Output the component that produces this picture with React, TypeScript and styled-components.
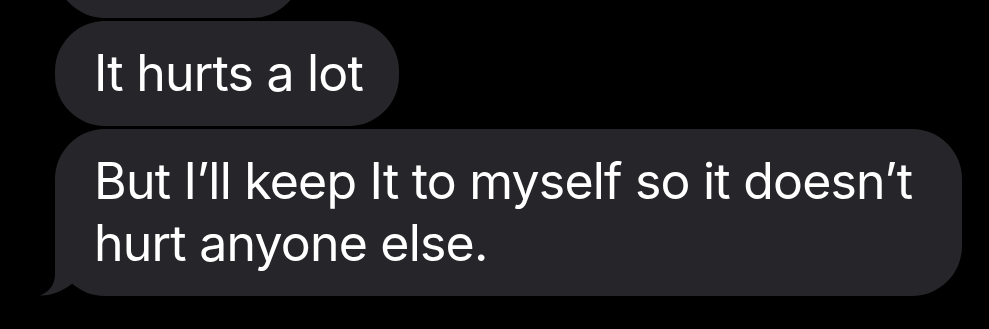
import React from "react";
import styled, { createGlobalStyle } from "styled-components";

const GlobalStyle = createGlobalStyle`
  html, body {
    margin: 0;
    padding: 0;
    background: #000;
    overflow: hidden;
  }
  body {
    font-family: Inter, "Noto Sans", "Liberation Sans", sans-serif;
    -webkit-font-smoothing: antialiased;
  }
`;

const Thread = styled.div`
  display: flex;
  flex-direction: column;
  align-items: flex-start;
  gap: 3px;
  padding-left: 55px;
  margin-top: -87px;
  width: 989px;
  height: 416px;
  box-sizing: border-box;
`;

const Bubble = styled.div<{ $width?: number }>`
  position: relative;
  box-sizing: border-box;
  max-width: 907px;
  ${(p) => (p.$width ? `width: ${p.$width}px;` : "")}
  padding: 21px 36px 22px 39px;
  background: #262529;
  border-radius: 50px;
  color: #fff;
  font-size: 50px;
  line-height: 62px;
  letter-spacing: -0.8px;
`;

const Tail = styled.svg`
  position: absolute;
  left: -16px;
  bottom: 0;
  width: 40px;
  height: 51px;
  display: block;
`;

export default function App() {
  return (
    <>
      <GlobalStyle />
      <Thread>
        <Bubble $width={247}>{"\u00a0"}</Bubble>
        <Bubble>It hurts a lot</Bubble>
        <Bubble>
          But I’ll keep It to myself so it doesn’t hurt anyone else.
          <Tail viewBox="0 0 40 51">
            <path
              d="M16 0 L16 29 C16 40 10 47 1 50.5 C12 51 24 46 34 38 L34 0 Z"
              fill="#262529"
            />
          </Tail>
        </Bubble>
      </Thread>
    </>
  );
}
